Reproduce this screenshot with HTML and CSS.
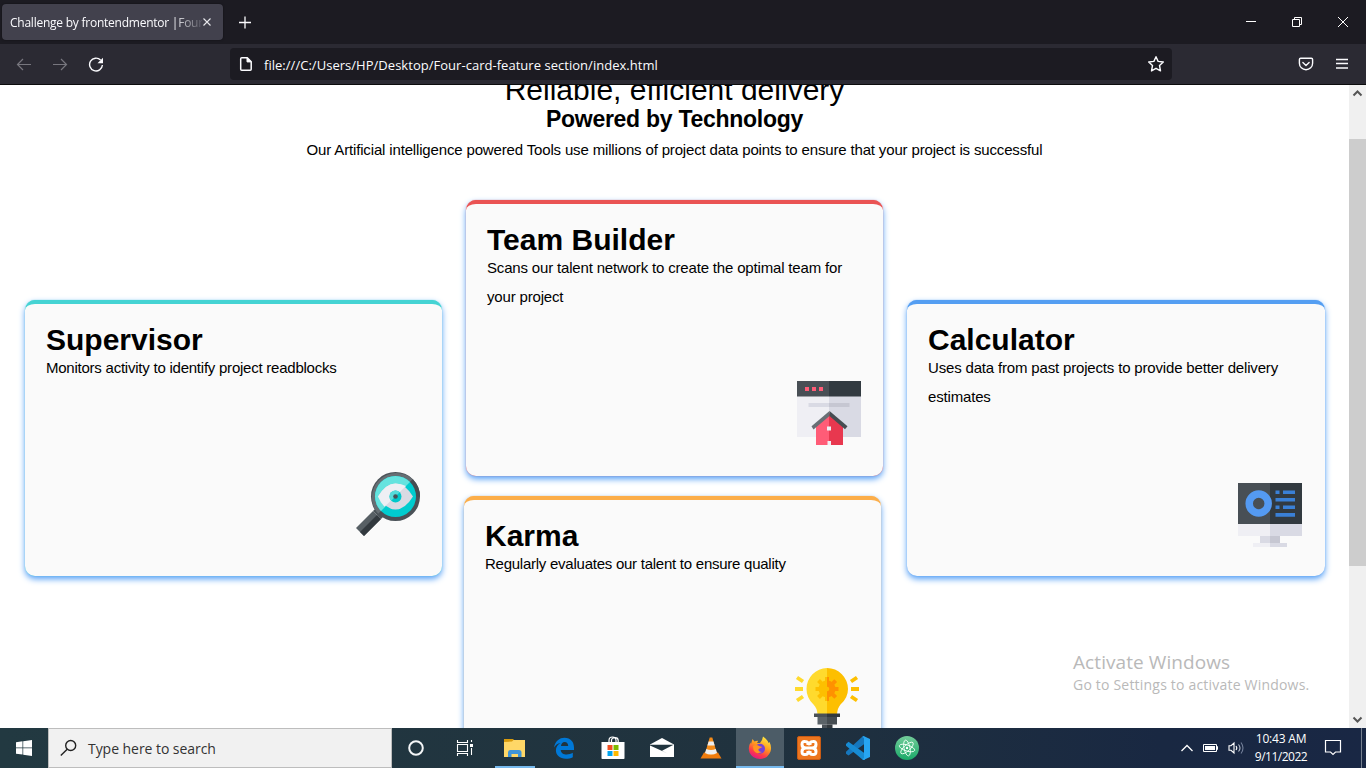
FILE: index.html
```html
<!DOCTYPE html>
<html lang="en">
<head>
<meta charset="utf-8">
<title>Challenge by frontendmentor |Four-card-feature section</title>
<link rel="stylesheet" href="styles.css">
</head>
<body>
<div class="screen">
  <header class="tabbar">
    <div class="tab"><span class="tab-title">Challenge by frontendmentor |Four-</span>
      <svg class="tab-close" width="10" height="10" viewBox="0 0 10 10"><path d="M1.500 1.500l7 7m0-7l-7 7" stroke="#e8e8ec" stroke-width="1.100"/></svg>
    </div>
    <svg class="new-tab" width="14" height="14" viewBox="0 0 14 14"><path d="M1 7.500h12M7 1.500v12" stroke="#fbfbfe" stroke-width="1.300"/></svg>
    <div class="window-controls">
      <svg width="12" height="12" viewBox="0 0 12 12"><path d="M1 5.500h10" stroke="#fff"/></svg>
      <svg width="12" height="12" viewBox="0 0 12 12" fill="none" stroke="#fff"><path d="M1.500 3.500h7v7h-7zM3.500 3.500v-2h7v7h-2"/></svg>
      <svg width="12" height="12" viewBox="0 0 12 12"><path d="M1 1l10 10M11 1l-10 10" stroke="#fff"/></svg>
    </div>
  </header>
  <nav class="toolbar">
    <div class="nav-buttons">
      <svg width="16" height="16" viewBox="0 0 16 16" fill="none" stroke="#77767e" stroke-width="1.200"><path d="M15 8.500H1.500M7 3L1.500 8.500L7 14"/></svg>
      <svg width="16" height="16" viewBox="0 0 16 16" fill="none" stroke="#77767e" stroke-width="1.200"><path d="M1 8.500h13.500M9 3L14.500 8.500L9 14"/></svg>
      <svg width="16" height="16" viewBox="0 0 16 16" fill="none" stroke="#fbfbfe" stroke-width="1.400"><path d="M12.600 4.100A6.400 6.400 0 1 0 14.400 9"/><path d="M15 1.800v5.500H9.500z" fill="#fbfbfe" stroke="none"/></svg>
    </div>
    <div class="urlbar">
      <svg width="16" height="16" viewBox="0 0 16 16" fill="none" stroke="#fbfbfe" stroke-width="1.500" stroke-linejoin="round"><path d="M3.700 1.700h5.600l3.900 4v7.600q0 1-1 1H3.700q-1 0-1-1V2.700q0-1 1-1z"/><path d="M9 1.700v4.200h4.200z" fill="#fbfbfe" stroke-width="1"/></svg>
      <span class="url">file:///C:/Users/HP/Desktop/Four-card-feature section/index.html</span>
      <svg class="star" width="18" height="18" viewBox="0 0 18 18" fill="none" stroke="#fbfbfe" stroke-width="1.400" stroke-linejoin="round"><path d="M9 1.700l2.100 4.700 5.200.600-3.800 3.500 1 5.400L9 13.300l-4.500 2.600 1-5.400L1.700 7l5.200-.6z"/></svg>
    </div>
    <svg class="pocket" width="16" height="16" viewBox="0 0 16 16" fill="none" stroke="#fbfbfe" stroke-width="1.400" stroke-linecap="round" stroke-linejoin="round"><path d="M2.700 2.300h10.600q1.300 0 1.300 1.300v3.600a6.600 6.600 0 0 1-13.200 0V3.600q0-1.300 1.300-1.300z"/><path d="M4.900 6.500L8 9.400l3.100-2.900"/></svg>
    <svg class="menu" width="14" height="14" viewBox="0 0 14 14"><path d="M1 2.500h12M1 6.500h12M1 11h12" stroke="#fbfbfe" stroke-width="1.300"/></svg>
  </nav>
  <div class="viewport">
    <main class="page">
      <h1 class="headline">Reliable, efficient delivery</h1>
      <h2 class="subhead">Powered by Technology</h2>
      <p class="intro">Our Artificial intelligence powered Tools use millions of project data points to ensure that your project is successful</p>
      <section class="cards">
        <article class="card supervisor">
          <h3>Supervisor</h3><p>Monitors activity to identify project readblocks</p>
          <svg class="card-icon" width="64" height="64" viewBox="0 0 64 64">
            <path d="M17 39l8 8L8 64 0 56z" fill="#575f64"/><path d="M21 43l4 4L8 64l-4-4z" fill="#32393e"/><path d="M17 39l4-4 8 8-4 4z" fill="#4b5358"/>
            <circle cx="39.500" cy="24.500" r="24.500" fill="#4a5157"/><path d="M22.200 41.800A24.500 24.500 0 0 1 56.800 7.200z" fill="#666e73"/><path d="M56.800 7.200a24.500 24.500 0 0 1 7.200 17.300h-5L52 12z" fill="#464d52"/>
            <circle cx="39.500" cy="24.500" r="20.500" fill="#00cccf"/><path d="M25 39A20.500 20.500 0 0 1 54 10z" fill="#65e3df"/>
            <path d="M22 24.500Q30 11.500 39.500 11.500T57 24.500Q49 37.500 39.500 37.500T22 24.500z" fill="#d9dae3"/><path d="M22 24.500Q30 11.500 39.500 11.500Q45.500 11.500 50 14L28.500 34.800Q24.500 31 22 24.500z" fill="#efeff4"/>
            <circle cx="39.500" cy="24.500" r="6" fill="#00c8cb"/><path d="M35.200 28.800a6 6 0 0 1 8.500-8.500z" fill="#55dcda"/><circle cx="39.500" cy="24.500" r="2.300" fill="#485157"/>
          </svg>
        </article>
        <div class="middle">
          <article class="card team">
            <h3>Team Builder</h3><p>Scans our talent network to create the optimal team for your project</p>
            <svg class="card-icon" width="64" height="64" viewBox="0 0 64 64">
              <path d="M0 15h32v41H0z" fill="#efeff4"/><path d="M32 15h32v41H32z" fill="#d9dae4"/><path d="M0 0h32v15.500H0z" fill="#484f55"/><path d="M32 0h32v15.500H32z" fill="#323a40"/>
              <path d="M8 6h4v4H8zM15 6h4v4h-4zM22 6h4v4h-4z" fill="#ff5c77"/><path d="M11.500 22H32v4H11.500z" fill="#d9dae4"/><path d="M32 22h20.500v4H32z" fill="#c6c7d2"/>
              <path d="M19 43l13-11v32H19z" fill="#ff5c77"/><path d="M32 32l14 11v21H32z" fill="#e8384f"/><path d="M16.500 48.500L32.500 35V30L14.500 45.300z" fill="#686f75"/><path d="M32.500 30l18 15.300-2.500 3L32.500 35z" fill="#464d52"/>
              <path d="M30 45.500h4v4h-4zM30.500 60h3.500v4h-3.500z" fill="#efeff4"/>
            </svg>
          </article>
          <article class="card karma">
            <h3>Karma</h3><p>Regularly evaluates our talent to ensure quality</p>
            <svg class="card-icon" width="64" height="64" viewBox="0 0 64 64">
              <path d="M32 0A21 21 0 0 0 11.500 21Q11.500 30 18.500 36.500Q22 40 22.500 46H32z" fill="#ffda2d"/><path d="M32 0A21 21 0 0 1 53 21Q53 30 45.500 36.500Q42.500 40 42 46H32z" fill="#fdbf00"/>
              <circle cx="32" cy="21" r="8.500" fill="#fdbf00"/><path d="M32 9v24M20.500 21h23M23.500 12.500l17 17M40.500 12.500l-17 17" stroke="#fdbf00" stroke-width="4"/>
              <path d="M32 12.500a8.500 8.500 0 0 1 0 17z" fill="#ff9100"/><path d="M32 9h2v6h-2zM32 27h2v6h-2zM38 19h5.500v4H38zM36 14.500l3.300-3.300 2.800 2.800-3.300 3.300zM36 27.500l3.300 3.300 2.800-2.800-3.300-3.300z" fill="#ff9100"/><circle cx="32" cy="21" r="2.300" fill="#fdbf00"/>
              <g stroke="#ffda2d" stroke-width="3.800"><path d="M0 21h8M2 9.500l6 4M2 32.500l6-4"/></g><g stroke="#fdbf00" stroke-width="3.800"><path d="M56 21h8M62 9.500l-6 4M62 32.500l-6-4"/></g>
              <path d="M19 45.500h13V49H19z" fill="#4a5157"/><path d="M32 45.500h13V49H32z" fill="#32393e"/><path d="M22.500 49H32v7.500h-9.500z" fill="#5b6368"/><path d="M32 49h10v7.500H32z" fill="#464d52"/><path d="M27 56.500h5V64h-5z" fill="#4a5157"/><path d="M32 56.500h5.500V64H32z" fill="#32393e"/>
            </svg>
          </article>
        </div>
        <article class="card calculator">
          <h3>Calculator</h3><p>Uses data from past projects to provide better delivery estimates</p>
          <svg class="card-icon" width="64" height="64" viewBox="0 0 64 64">
            <path d="M0 0h32v41H0z" fill="#484f55"/><path d="M32 0h32v41H32z" fill="#323a40"/><path d="M0 41h32v12H0z" fill="#efeff4"/><path d="M32 41h32v12H32z" fill="#d9dae4"/>
            <path d="M22 53h10v8H22z" fill="#d9dae4"/><path d="M32 53h10v8H32z" fill="#c6c7d2"/><path d="M15 60h17v4H15z" fill="#efeff4"/><path d="M32 60h17v4H32z" fill="#d9dae4"/>
            <circle cx="20.700" cy="20.500" r="9.500" fill="none" stroke="#549af2" stroke-width="7.500"/>
            <path d="M37.500 7.500h4v3.500h-4zM45 7.500h12V11H45zM37.500 15H57v3.500H37.500zM37.500 22.500h4V26h-4zM45 22.500h12V26H45zM37.500 30H57v3.700H37.500z" fill="#3a80d6"/>
          </svg>
        </article>
      </section>
    </main>
    <aside class="scrollbar">
      <svg width="17" height="17" viewBox="0 0 17 17" fill="none" stroke="#555" stroke-width="2"><path d="M4.500 10.500l4-4 4 4"/></svg>
      <div class="thumb"></div>
      <svg width="17" height="17" viewBox="0 0 17 17" fill="none" stroke="#555" stroke-width="2"><path d="M4.500 6.500l4 4 4-4"/></svg>
    </aside>
    <div class="watermark"><div class="wm-title">Activate Windows</div><div class="wm-text">Go to Settings to activate Windows.</div></div>
  </div>
  <footer class="taskbar">
    <div class="start"><svg width="16" height="16" viewBox="0 0 16 16" fill="#fff"><path d="M0 2.200L6.500 1.300v6.300H0zM7.200 1.200L16 0v7.600H7.200zM0 8.300h6.500v6.300L0 13.700zM7.200 8.300H16V16l-8.800-1.200z"/></svg></div>
    <div class="search"><svg width="18" height="18" viewBox="0 0 18 18" fill="none" stroke="#222" stroke-width="1.400"><circle cx="10.700" cy="6.500" r="5"/><path d="M7.200 10.200L.800 16.600"/></svg><span>Type here to search</span></div>
    <div class="slot"><svg width="18" height="18" viewBox="0 0 18 18"><circle cx="9" cy="9" r="6.800" fill="none" stroke="#f4f6f7" stroke-width="2"/></svg></div>
    <div class="slot task-view"><svg width="18" height="18" viewBox="0 0 18 18" fill="none" stroke="#fff" stroke-width="1.100"><path d="M1.500 1v2.500h10V1M1.500 17v-2.500h10V17M1.500 5.500h10v7h-10zM15.500 1v2M15.500 9v7"/><path d="M14 5h3v3h-3z" fill="#fff" stroke="none"/></svg></div>
    <div class="slot active"><svg width="24" height="24" viewBox="0 0 24 24"><path d="M1 3h9l2 2v4H1z" fill="#d99b0d"/><path d="M1 6l8-.5L10.500 4H22v17H1z" fill="#ffd767"/><path d="M5 21v-4.500Q5 14 7.500 14h8.500q2.500 0 2.500 2.500V21h-3.500v-3H8.500v3z" fill="#3f94d8"/></svg></div>
    <div class="slot"><svg width="24" height="24" viewBox="0 0 24 24"><path d="M2 11.500C3.200 5 7.500 1.700 12.500 1.700 18.700 1.700 22 6 22 11.800V14H8.700c.2 3.200 2.900 4.500 6 4.500 2.200 0 4.300-.6 6.100-1.700v4.400c-2 1-4.500 1.500-7 1.500-6 0-9.900-3.600-9.900-8.500 0-3.300 1.900-6 4.700-7.300C5.500 7.400 3.300 9 2 11.500zM9 10h7.200c0-2.300-1.200-4-3.500-4S9.200 7.700 9 10z" fill="#0078d7"/></svg></div>
    <div class="slot"><svg width="24" height="24" viewBox="0 0 24 24"><path d="M8 7V4.500Q8 1 11.500 1T15 4.500V7M10.500 7V4.500q0-2.800 3.500-2.800 3.200 0 3.200 2.800V7" fill="none" stroke="#fff" stroke-width="1.200"/><path d="M.5 6h23v16.200q0 .8-.8.800H1.300q-.8 0-.8-.800z" fill="#fff"/><path d="M6.500 9h5v5h-5z" fill="#f25022"/><path d="M12.500 9h5v5h-5z" fill="#7fba00"/><path d="M6.500 15h5v5h-5z" fill="#00a4ef"/><path d="M12.500 15h5v5h-5z" fill="#ffb900"/></svg></div>
    <div class="slot"><svg width="24" height="24" viewBox="0 0 24 24"><path d="M0 8.500L12 2l12 6.500V21H0z" fill="#fff"/><path d="M0 8.800h23.500L12 14.700l5.700 2.700L0 9.500z" fill="#21353f"/></svg></div>
    <div class="slot"><svg width="24" height="24" viewBox="0 0 24 24"><path d="M5 16.500h14l3.500 6h-21z" fill="#ef7b0c"/><path d="M10.700 1.500h2.600L18 17.500q-6 3.500-12 0z" fill="#f48b18"/><path d="M9.600 5.500h4.900l1.200 4H8.400zM7.300 13q4.700 2 9.500 0l1.200 4q-6 3-12 0z" fill="#eee"/></svg></div>
    <div class="slot active current"><svg width="24" height="24" viewBox="0 0 24 24"><defs><linearGradient id="fox" x1=".8" y1="0" x2=".3" y2="1"><stop stop-color="#fff044"/><stop offset=".45" stop-color="#ff9a1f"/><stop offset=".75" stop-color="#ff3b47"/><stop offset="1" stop-color="#e21587"/></linearGradient></defs><path d="M4.500 3l2 2.500q2-.9 3.600-.6L9 7h3l2-3L15 .500Q20 4 20.500 7l1-1Q24 11 22.500 15.500 19.500 23 12 23T1.500 16.500Q-.3 11 2.500 6.500L3 8z" fill="url(#fox)"/><circle cx="12" cy="12.700" r="5" fill="#7542d8"/><path d="M5 10q3-2 6.500.2l3 .8-4 2q-.5 3 3.500 3Q8 19 5.500 14z" fill="#ff9420"/></svg></div>
    <div class="slot"><svg width="24" height="24" viewBox="0 0 24 24"><rect x=".5" y=".500" width="23" height="23" rx="1.500" fill="#ed761f" stroke="#c95b14"/><path d="M8.700 12h6.600M9 12Q5 12 5 8.500T8 5.500Q12 5.500 10.500 9M15 12q4 0 4-3.500t-3-3Q12 5.500 13.500 9M9 12q-4 0-4 3.500t3 3q4 0 2.500-3.500M15 12q4 0 4 3.500t-3 3q-4 0-2.500-3.500" fill="none" stroke="#fff" stroke-width="3"/></svg></div>
    <div class="slot"><svg width="24" height="24" viewBox="0 0 24 24"><path d="M0 15.700L17 0l2 1v6.500L2.500 19.500 0 17.700z" fill="#1677bd"/><path d="M0 8L2.500 5.700 19 17.500V24h-2L0 9.800z" fill="#178bd3"/><path d="M17.500 0L24 3v18l-6.500 3-1-1 1.500-1V2l-1.500-1z" fill="#27a5f2"/></svg></div>
    <div class="slot"><svg width="24" height="24" viewBox="0 0 24 24"><defs><linearGradient id="leaf" x2="0" y2="1"><stop stop-color="#73cc9a"/><stop offset="1" stop-color="#19a968"/></linearGradient></defs><circle cx="12" cy="12" r="12" fill="url(#leaf)"/><g fill="none" stroke="#effff5" stroke-width=".9"><ellipse cx="12" cy="12" rx="3" ry="8" transform="rotate(-12 12 12)"/><ellipse cx="12" cy="12" rx="3" ry="8" transform="rotate(48 12 12)"/><ellipse cx="12" cy="12" rx="3" ry="8" transform="rotate(-72 12 12)"/></g><circle cx="12" cy="12" r="1.200" fill="#fff"/></svg></div>
    <div class="tray">
      <svg width="14" height="14" viewBox="0 0 14 14" fill="none" stroke="#fff" stroke-width="1.300"><path d="M1.500 10L7 4.500 12.500 10"/></svg>
      <svg width="16" height="10" viewBox="0 0 16 10"><path d="M.5 1.500h13v7H.5zM13.500 3.500h1v3h-1" fill="none" stroke="#fff"/><path d="M2 3h10v4H2z" fill="#fff"/></svg>
      <svg width="18" height="14" viewBox="0 0 18 14" fill="none" stroke="#fff" stroke-width="1.100"><path d="M1 4.700h2L6 2v10L3 9.300H1zM8 5q1.600 2 0 4"/><path d="M10.500 3.500q3 3.500 0 7" stroke="#b9c0cd"/><path d="M13 1.500q4 5.500 0 11" stroke="#74809a"/></svg>
    </div>
    <div class="clock"><span>10:43 AM</span><span class="date">9/11/2022</span></div>
    <svg class="notify" width="18" height="18" viewBox="0 0 18 18" fill="none" stroke="#fff" stroke-width="1.200"><path d="M1.500 1.500h15v11.500h-5L9 15.500 6.500 13h-5z"/></svg>
    <i class="show-desktop"></i>
  </footer>
</div>
</body>
</html>
```
FILE: styles.css
```css
* { box-sizing: border-box; }
body { margin: 0; background: #fff; font-family: "Liberation Sans", Arial, sans-serif; color: #000; overflow: hidden; }
svg { display: block; flex: none; }
h1, h2, h3, p { margin: 0; }
.screen { width: 1366px; height: 768px; display: flex; flex-direction: column; overflow: hidden; }

.tabbar { height: 44px; flex: none; background: #1c1b22; display: flex; align-items: center; padding-left: 2px; }
.tab { width: 221px; height: 36px; border-radius: 4px; background: #42414d; display: flex; align-items: center; padding: 0 11px 0 8px; box-shadow: 0 0 2px rgba(0,0,0,.5); }
.tab-title { font: 12px/18px "Open Sans", sans-serif; letter-spacing: -.24px; color: #fbfbfe; width: 192px; padding-top: 1px; white-space: nowrap; -webkit-mask-image: linear-gradient(90deg, #000 84%, transparent 102%); mask-image: linear-gradient(90deg, #000 84%, transparent 102%); }
.new-tab { margin-left: 15px; }
.window-controls { margin-left: auto; display: flex; gap: 34px; padding-right: 17px; }

.toolbar { height: 41px; flex: none; background: #2b2a33; border-bottom: 1px solid #0c0c0d; display: flex; align-items: center; padding-left: 16px; }
.nav-buttons { display: flex; gap: 20px; width: 214px; }
.urlbar { width: 942px; height: 32px; border-radius: 4px; background: #1c1b22; display: flex; align-items: center; padding: 0 7px 0 8px; }
.url { margin-left: 10px; padding-top: 2px; color: #fbfbfe; font: 13px "Open Sans", sans-serif; letter-spacing: .03px; white-space: nowrap; }
.star { margin-left: auto; }
.pocket { margin-left: 126px; }
.menu { margin-left: 21px; }

.viewport { position: relative; height: 643px; flex: none; display: flex; overflow: hidden; background: #fff; }
.page { width: 1349px; flex: none; }
.headline { height: 23px; line-height: 34px; margin-top: -12px; margin-bottom: 10px; font-size: 30px; font-weight: 400; text-align: center; white-space: nowrap; }
.subhead { height: 26px; line-height: 26px; font-size: 23px; letter-spacing: -.27px; text-align: center; }
.intro { margin-top: 3px; height: 29px; line-height: 29px; font-size: 15px; letter-spacing: -.155px; text-align: center; white-space: nowrap; }
.cards { display: flex; gap: 24px; padding: 36px 24px 0 25px; height: 600px; align-items: flex-start; }
.card { --edge: #549ef2; width: 417px; height: 276px; border-top: 4px solid var(--edge); border-radius: 10px; background: #fafafa; padding: 19px 21px 0; box-shadow: 0 0 1px var(--edge), 0 3px 6px #549ff6; display: flex; flex-direction: column; }
.card h3 { font-size: 30px; line-height: 34px; }
.card p { font-size: 15px; line-height: 29px; margin-top: -4px; letter-spacing: -.17px; }
.card-icon { margin: auto 1px 40px auto; }
.middle { width: 418px; display: flex; flex-direction: column; gap: 20px; }
.supervisor { --edge: #45d3d3; margin-top: 100px; }
.card.supervisor p { letter-spacing: -.235px; }
.team { --edge: #ea5353; }
.team .card-icon { margin-bottom: 31px; }
.karma { --edge: #fcae4a; margin-left: -2px; }
.card.karma p { letter-spacing: -.25px; }
.calculator { margin-top: 100px; width: 418px; margin-left: -1px; }
.calculator .card-icon { margin-right: 2px; margin-bottom: 29px; }

.scrollbar { width: 17px; flex: none; background: #f0f0f0; display: flex; flex-direction: column; }
.thumb { height: 427px; margin: 37px 0 auto; background: #cdcdcd; }
.watermark { position: absolute; left: 1073px; top: 564px; color: #b9b9b9; font-family: "Open Sans", sans-serif; white-space: nowrap; }
.wm-title { font-size: 19px; line-height: 27px; letter-spacing: .08px; }
.wm-text { font-size: 14px; line-height: 18px; letter-spacing: .2px; }

.taskbar { height: 40px; flex: none; display: flex; align-items: center; background: linear-gradient(90deg, #223941, #20323e 55%, #192842 85%, #192744); color: #fff; }
.start { width: 48px; padding-left: 16px; }
.search { width: 344px; height: 40px; border: 1px solid #bdbdbd; background: #f1f1f1; display: flex; align-items: center; padding-left: 11px; color: #333; font: 14px "Open Sans", sans-serif; letter-spacing: -.05px; }
.search span { margin-left: 10px; }
.slot { width: 48px; height: 40px; display: grid; place-items: center; margin-right: 1px; flex: none; }
.task-view { width: 47px; margin-right: 3px; }
.active { background: linear-gradient(#76b9ed, #76b9ed) 50% 100% / 40px 2px no-repeat; }
.current { background-color: #4c5c67; background-size: 48px 2px; }
.tray { margin-left: auto; display: flex; align-items: center; gap: 9px; }
.clock { width: 62px; margin-left: 4px; font: 12px/18px "Open Sans", sans-serif; letter-spacing: -.2px; display: flex; flex-direction: column; align-items: center; white-space: nowrap; }
.date { letter-spacing: -.5px; }
.notify { margin-left: 12px; }
.show-desktop { width: 1px; height: 40px; background: #76808f; margin: 0 4px 0 19px; }
```
